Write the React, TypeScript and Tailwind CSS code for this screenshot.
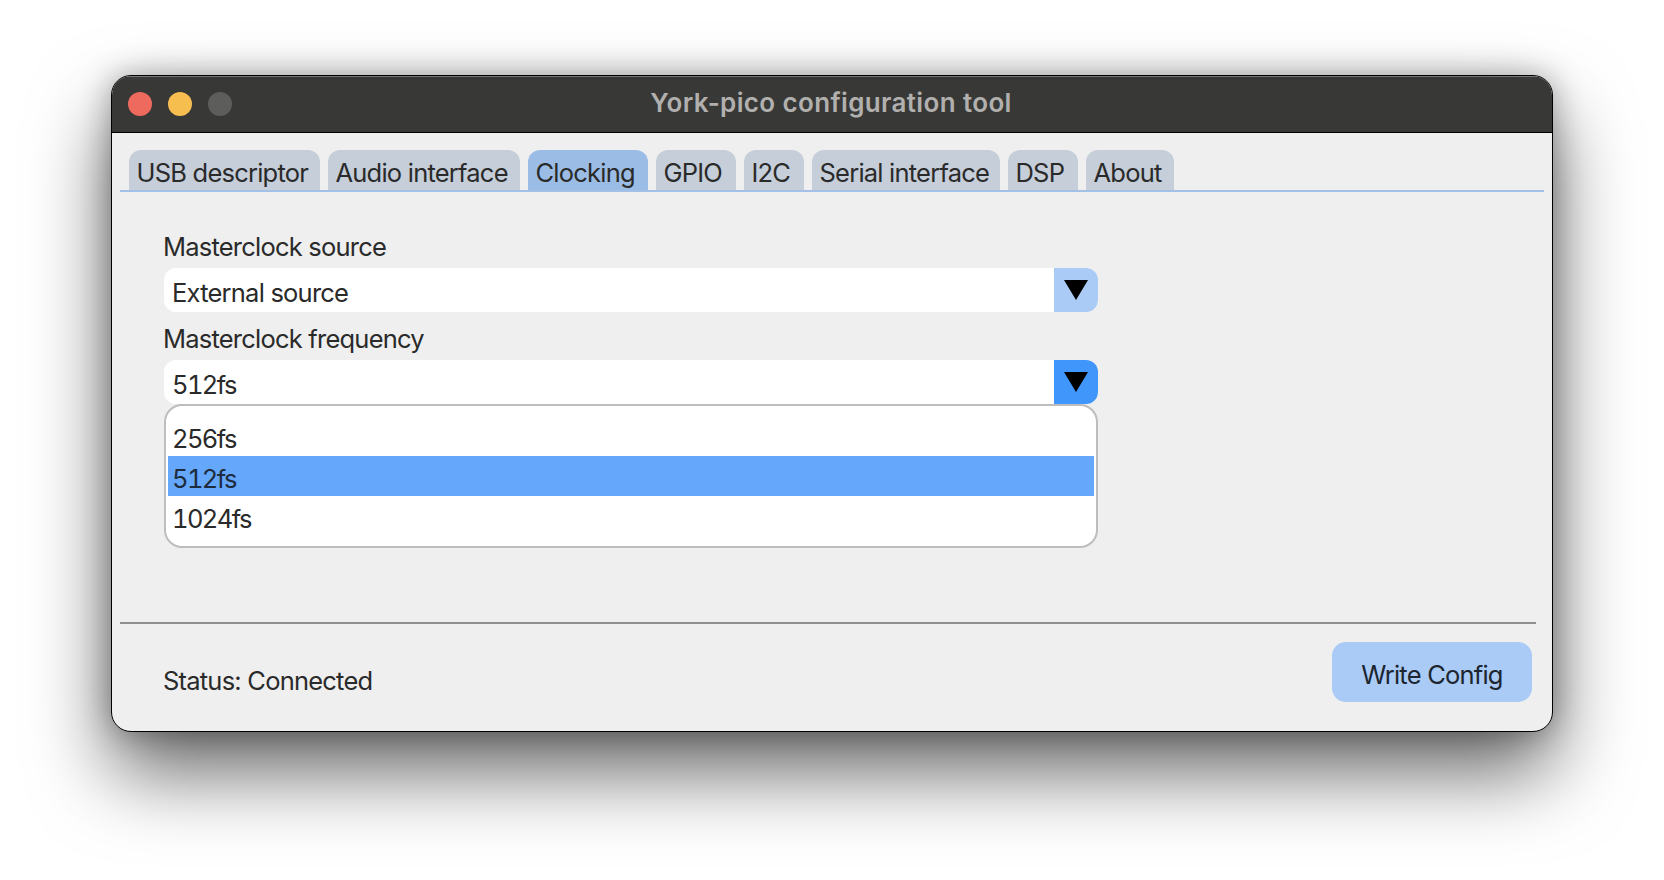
const tabs = [
  { label: 'USB descriptor', width: 'w-[191px]' },
  { label: 'Audio interface', width: 'w-[192px]' },
  { label: 'Clocking', width: 'w-[120px]', active: true },
  { label: 'GPIO', width: 'w-[80px]' },
  { label: 'I2C', width: 'w-[60px]' },
  { label: 'Serial interface', width: 'w-[188px]' },
  { label: 'DSP', width: 'w-[70px]' },
  { label: 'About', width: 'w-[88px]' },
];

const options = ['256fs', '512fs', '1024fs'];

function Arrow() {
  return (
    <svg width="24" height="20" viewBox="0 0 24 20">
      <path d="M0 0H24L12 20Z" fill="#000" />
    </svg>
  );
}

function ComboBox({ value, open }: { value: string; open?: boolean }) {
  return (
    <div className="flex h-[44px] w-[934px] items-stretch overflow-hidden rounded-[12px] bg-white">
      <div className="flex-1 pl-[8px] pt-[3px] leading-[44px]">{value}</div>
      <div
        className={
          open
            ? 'flex w-[44px] items-center justify-center bg-[#4096fb]'
            : 'flex w-[44px] items-center justify-center bg-[#a9cbf5]'
        }
      >
        <Arrow />
      </div>
    </div>
  );
}

export default function App() {
  return (
    <div className="h-[880px] w-[1664px] overflow-hidden bg-white pl-[111px] pt-[75px] font-['Inter',sans-serif] text-[25.5px] tracking-[-0.78px] text-[#2a2a2a]">
      <div className="flex h-[657px] w-[1442px] flex-col overflow-hidden rounded-[20px] border border-black bg-[#efefef] shadow-[0_40px_80px_rgba(0,0,0,0.6),0_0_30px_rgba(0,0,0,0.3)]">
        {/* title bar */}
        <div className="relative flex h-[57px] shrink-0 items-center gap-[16px] border-b border-black bg-[#383836] pl-[16px] shadow-[inset_0_1px_0_#777]">
          <span className="h-[24px] w-[24px] rounded-full bg-[#ee6a5f]" />
          <span className="h-[24px] w-[24px] rounded-full bg-[#f5be4f]" />
          <span className="h-[24px] w-[24px] rounded-full bg-[#5d5d5c]" />
          <div className="absolute inset-x-0 top-0 pr-[2px] text-center text-[26px] font-semibold leading-[54px] tracking-[0.36px] text-[#b1b0ae]">
            York-pico configuration tool
          </div>
        </div>

        {/* tab strip */}
        <div className="ml-[8px] mr-[8px] mt-[17px] flex h-[42px] shrink-0 items-end gap-[8px] border-b-2 border-[#a3c1e6] pl-[9px]">
          {tabs.map((tab) => (
            <div
              key={tab.label}
              className={
                tab.active
                  ? `${tab.width} h-[40px] rounded-t-[12px] bg-[#9bbde5] pl-[7.5px] pt-[3px] leading-[40px]`
                  : `${tab.width} h-[40px] rounded-t-[12px] bg-[#c5ced9] pl-[7.5px] pt-[3px] leading-[40px]`
              }
            >
              {tab.label}
            </div>
          ))}
        </div>

        {/* clocking page */}
        <div className="relative flex flex-1 flex-col pl-[52px] pt-[39px]">
          <div className="-ml-px h-[32px] leading-[32px]">Masterclock source</div>
          <div className="mt-[5px]">
            <ComboBox value="External source" />
          </div>
          <div className="-ml-px mt-[11px] h-[32px] leading-[32px]">Masterclock frequency</div>
          <div className="mt-[5px] tabular-nums tracking-[-1.6px]">
            <ComboBox value="512fs" open />
          </div>

          <div className="absolute left-[52px] top-[212px] flex h-[144px] w-[934px] flex-col rounded-[18px] border-2 border-[#bdbdbd] bg-white pl-[2px] pr-[2px] pt-[10px] tabular-nums tracking-[-1.6px]">
            {options.map((option) => (
              <div
                key={option}
                className={
                  option === '512fs'
                    ? 'h-[40px] bg-[#65a8fb] pl-[4px] leading-[46px] text-[#1d2b3d]'
                    : 'h-[40px] pl-[4px] leading-[46px]'
                }
              >
                {option}
              </div>
            ))}
          </div>
        </div>

        {/* footer */}
        <div className="ml-[8px] mr-[16px] h-[2px] shrink-0 bg-[#8f8f8f]" />
        <div className="flex h-[107px] shrink-0 items-start justify-between pl-[51px] pr-[20px] pt-[18px]">
          <div className="pt-[19px] leading-[40px]">Status: Connected</div>
          <button className="h-[60px] w-[200px] rounded-[14px] bg-[#a9cbf5] pt-[7px] text-[#1c2530]">Write Config</button>
        </div>
      </div>
    </div>
  );
}
